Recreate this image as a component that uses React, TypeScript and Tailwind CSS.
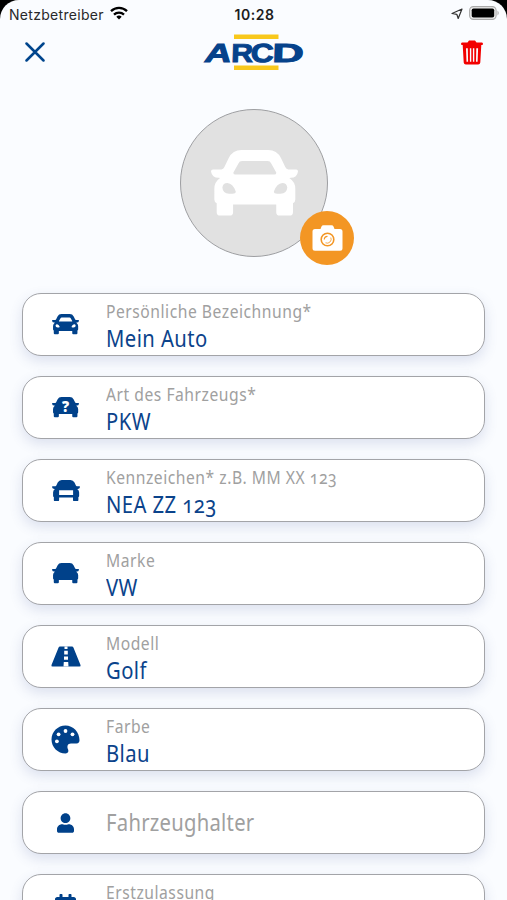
import type { ReactNode } from 'react';
import { FaUser, FaCalendarAlt } from 'react-icons/fa';

const BODY =
  'M129 210H154Q160 210 163 203L176 176Q188 152 214 152H294Q320 152 332 176L345 203Q348 210 354 210H378Q383 210 383 216Q380 235 362 235L357 236Q375 248 375 268V300Q375 308 368 311V338Q368 348 358 348H328Q318 348 318 338V315H189V338Q189 348 179 348H150Q140 348 140 338V311Q133 308 133 300V268Q133 248 150 236L146 235Q126 235 123 216Q123 210 129 210Z';
const WINDOW = 'M190 219L205 192Q208 185 216 185H292Q300 185 303 192L318 219Q319 225 312 225H196Q189 225 190 219Z';
const LIGHTS =
  'M157 264Q159 251 172 251Q188 252 197 276Q198 283 187 283H177Q158 281 157 264ZM351 264Q349 251 336 251Q320 252 311 276Q310 283 321 283H331Q350 281 351 264Z';

function Car({ className, children, cut = '' }: { className: string; children?: ReactNode; cut?: string }) {
  return (
    <svg viewBox="123 152 260 196" className={className} fill="currentColor">
      <path fillRule="evenodd" d={BODY + cut} />
      {children}
    </svg>
  );
}

function Road() {
  return (
    <svg viewBox="0 0 30 21" className="w-[30px]" fill="currentColor">
      <path d="M9 0.5H21Q22 0.5 22.4 1.5L29.5 19Q30 20.5 28.5 20.5H1.5Q0 20.5 0.5 19L7.6 1.5Q8 0.5 9 0.5Z" />
      <path fill="white" d="M13.5 0.5H16.5V3H13.5ZM13.2 4.8H16.8V8.4H13.2ZM13 10.6H17V13.8H13ZM12.8 16H17.2L17.5 20.5H12.5Z" />
    </svg>
  );
}

function Palette() {
  return (
    <svg viewBox="0 0 29 29" className="w-[29px]" fill="currentColor">
      <path d="M14.5 0.5C6.8 0.5 0.5 6.8 0.5 14.5S6.8 28.5 14.5 28.5C17.3 28.5 17.8 26.2 17 24.3C15.8 21.5 16.5 18.5 20 18.5H25.5C27.5 18.5 28.5 17.3 28.5 15.3C28.5 7 22.2 0.5 14.5 0.5Z" />
      <g fill="white">
        <circle cx="14.5" cy="6" r="1.9" />
        <circle cx="7.6" cy="9.3" r="1.9" />
        <circle cx="21.5" cy="9.3" r="1.9" />
        <circle cx="5.9" cy="16.3" r="1.9" />
      </g>
    </svg>
  );
}

type Field = { label?: string; value?: string; icon: ReactNode };

const fields: Field[] = [
  { label: 'Persönliche Bezeichnung*', value: 'Mein Auto', icon: <Car className="w-[27px]" cut={WINDOW + LIGHTS} /> },
  {
    label: 'Art des Fahrzeugs*',
    value: 'PKW',
    icon: (
      <Car className="w-[27px] overflow-visible">
        <text
          transform="translate(253 295) scale(0.88 1)"
          textAnchor="middle"
          fill="white"
          fontSize="155"
          fontWeight="800"
          fontFamily="Open Sans, sans-serif"
        >
          ?
        </text>
      </Car>
    ),
  },
  {
    label: 'Kennzeichen* z.B. MM XX 123',
    value: 'NEA ZZ 123',
    icon: <Car className="w-[28px]" cut="M189 247H319V292H189Z" />,
  },
  { label: 'Marke', value: 'VW', icon: <Car className="w-[27px]" /> },
  { label: 'Modell', value: 'Golf', icon: <Road /> },
  { label: 'Farbe', value: 'Blau', icon: <Palette /> },
  { value: 'Fahrzeughalter', icon: <FaUser className="h-[20px] w-[17px]" /> },
  { label: 'Erstzulassung', icon: <FaCalendarAlt className="h-[24px] w-[21px]" /> },
];

function FieldCard({ field }: { field: Field }) {
  return (
    <div className="flex h-[63px] shrink-0 items-center rounded-[19px] border border-[#a3a4a8] bg-white shadow-[0_5px_13px_rgba(60,80,150,0.16)]">
      <div className="flex w-[83px] shrink-0 justify-center pl-0.5 text-[#00418a]">{field.icon}</div>
      <div className="flex flex-col items-start whitespace-nowrap">
        {field.label && (
          <span className="origin-left scale-x-[0.87] text-[18px] leading-[27px] tracking-[0.6px] text-[#a0a0a0]">{field.label}</span>
        )}
        <span
          className={`h-[27px] origin-left scale-x-[0.88] text-[23px] leading-[27px] ${
            field.label ? 'tracking-[0.5px] text-[#0b438b]' : 'tracking-[0.3px] text-[#a0a0a0]'
          }`}
        >
          {field.value}
        </span>
      </div>
    </div>
  );
}

function StatusBar() {
  return (
    <div className="grid h-7 shrink-0 grid-cols-3 items-center pl-[9px] pr-[7px] font-['Inter',sans-serif] text-black">
      <div className="flex items-center gap-[6px]">
        <span className="text-[14px] tracking-[0.3px] text-[#28282a]">Netzbetreiber</span>
        <svg viewBox="0 0 18 14" className="-mt-0.5 h-[14px] w-[18px]" fill="none" stroke="currentColor" strokeWidth="2.3">
          <path d="M1 5.2A11.5 11.5 0 0 1 17 5.2M4 8.6A7.2 7.2 0 0 1 14 8.6" />
          <path d="M9 13.5L6.3 10.8A4 4 0 0 1 11.7 10.8Z" fill="currentColor" stroke="none" />
        </svg>
      </div>
      <span className="text-center text-[14px] font-semibold tracking-[0.5px] text-[#1c1c1e]">10:28</span>
      <div className="flex items-center justify-end gap-[6px]">
        <svg viewBox="0 0 12 12" className="size-[12px]" fill="none" stroke="#333" strokeWidth="1.2" strokeLinejoin="round">
          <path d="M11 1L7.2 10.5L5.8 6.3L1 5.5Z" />
        </svg>
        <svg viewBox="0 0 31 14" className="-mt-0.5 h-[14px] w-[31px]">
          <rect x="0.6" y="0.6" width="26.5" height="12.8" rx="3.8" fill="#ececec" stroke="#aaa" strokeWidth="1.1" />
          <rect x="2.7" y="2.5" width="22.5" height="9" rx="1.8" fill="black" />
          <path d="M28.5 4.5Q31 7 28.5 9.5Z" fill="#aaa" />
        </svg>
      </div>
    </div>
  );
}

function Logo() {
  return (
    <svg viewBox="0 0 101 37" className="ml-px h-[37px] w-[101px] overflow-visible">
      <path fill="#f8c81c" d="M31 0.5H75.5V5H31ZM31 31.5H75.5V36H31Z" />
      <g fill="#06428b" stroke="#06428b" strokeWidth="1" fontFamily="Liberation Sans, sans-serif" fontWeight="700" fontSize="26">
        <text transform="translate(0.5 27.5) skewX(-12) scale(1.42 1)">A</text>
        <text transform="translate(28 27.5) skewX(-2) scale(1.16 1)">R</text>
        <text transform="translate(47.5 27.5) skewX(-2) scale(1.22 1)">C</text>
        <text transform="translate(69 27.5) skewX(-2) scale(1.68 1)">D</text>
      </g>
    </svg>
  );
}

export default function App() {
  return (
    <div className="h-[900px] w-[507px] overflow-hidden bg-black">
      <div className="flex h-full flex-col overflow-hidden rounded-t-[19px] bg-[#fafcff] font-['Noto_Sans',sans-serif] oldstyle-nums">
        <StatusBar />
        <header className="flex h-[48px] shrink-0 items-center justify-between pl-[25px] pr-[24px]">
          <svg viewBox="0 0 20 20" className="size-[20px]" fill="none" stroke="#00458d" strokeWidth="2.5" strokeLinecap="round">
            <path d="M1.5 1.5L18.5 18.5M18.5 1.5L1.5 18.5" />
          </svg>
          <Logo />
          <svg viewBox="0 0 22 25" className="h-[25px] w-[22px]" fill="#f20000">
            <path d="M1 2.5H6.5L8 0.5H14L15.5 2.5H21Q22 2.5 22 4Q22 5 21 5H1Q0 5 0 4Q0 2.5 1 2.5Z" />
            <path
              fillRule="evenodd"
              d="M1.7 5H20.3L19.3 22.5Q19 24.5 17.2 24.5H4.8Q3 24.5 2.7 22.5ZM5 8.3L5.5 21.8H7.1L6.8 8.3ZM8.9 8.3V21.8H10.3V8.3ZM11.9 8.3V21.8H13.3V8.3ZM15.3 8.3L15 21.8H16.6L17.1 8.3Z"
            />
          </svg>
        </header>
        <div className="flex shrink-0 justify-center pt-[33px]">
          <div className="relative flex size-[148px] items-center justify-center rounded-full border border-[#9d9ea1] bg-[#e1e1e1]">
            <Car className="ml-px w-[87px] text-white" cut={WINDOW + LIGHTS} />
            <div className="absolute -right-[27px] -bottom-[9px] flex size-[54px] items-center justify-center rounded-full bg-[#f39624]">
              <svg viewBox="0 0 31 26" className="ml-px h-[26px] w-[31px]">
                <path
                  fill="white"
                  d="M3 4H8.5L9.5 1.5Q10 0.3 11.5 0.3H19.5Q21 0.3 21.5 1.5L22.5 4H28Q30.5 4 30.5 6.5V23.3Q30.5 25.8 28 25.8H3Q0.5 25.8 0.5 23.3V6.5Q0.5 4 3 4Z"
                />
                <g fill="none" stroke="#f39624">
                  <circle cx="15.5" cy="14.5" r="6.3" strokeWidth="1.6" />
                  <path d="M12.3 14.5A3.2 3.2 0 0 1 15.5 11.3" strokeWidth="1.2" />
                  <path d="M18.8 12.5A4 4 0 0 1 13.5 17.8" strokeWidth="0.8" />
                </g>
              </svg>
            </div>
          </div>
        </div>
        <main className="flex flex-col gap-5 px-[22px] pt-[36px]">
          {fields.map(field => (
            <FieldCard key={field.label ?? field.value} field={field} />
          ))}
        </main>
      </div>
    </div>
  );
}
